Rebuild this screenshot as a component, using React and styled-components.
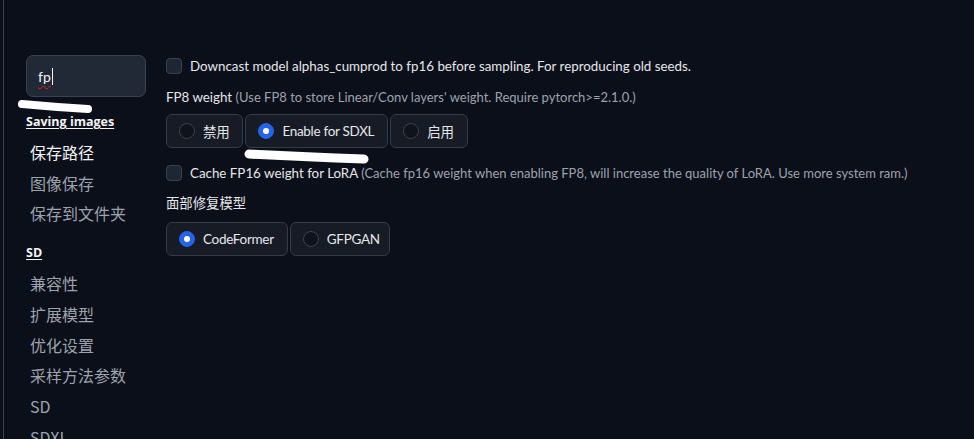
import React from 'react'
import styled, { createGlobalStyle } from 'styled-components'

const GlobalStyle = createGlobalStyle`
    html, body {
        margin: 0;
        padding: 0;
        background: #0b0f19;
        overflow: hidden;
    }
    body {
        font-family: Lato, "Noto Sans", "Noto Sans CJK SC", sans-serif;
        color: #e5e7eb;
    }
`;

const Page = styled.div`
    display: flex;
    height: 439px;
    margin-left: 3px;
    border-left: 1px solid #3b4252;
`;

const Sidebar = styled.nav`
    position: relative;
    width: 140px;
    padding: 55px 0 0 22px;
    display: flex;
    flex-direction: column;
    flex-shrink: 0;

    & > * {
        flex-shrink: 0;
    }
`;

const Search = styled.div`
    box-sizing: border-box;
    width: 120px;
    height: 42px;
    border-radius: 7px;
    background: #212836;
    border: 1px solid #3a4252;
    display: flex;
    align-items: center;
    padding-left: 11px;
    font-size: 14px;
    color: #f3f4f6;
`;

const Typed = styled.span`
    text-decoration: underline wavy #e02424;
    text-decoration-thickness: 1px;
    text-underline-offset: 3px;
`;

const Caret = styled.span`
    display: inline-block;
    width: 1px;
    height: 17px;
    background: #f3f4f6;
    margin-left: 1px;
`;

const GroupTitle = styled.a`
    font-family: "Open Sans", "Noto Sans CJK SC", sans-serif;
    font-size: 12.5px;
    font-weight: 700;
    color: #f3f4f6;
    text-decoration: underline;
    text-underline-offset: 2px;
    line-height: 20px;
    margin-top: ${props => props.first ? '15px' : '14px'};
    margin-bottom: 5px;
`;

const NavItem = styled.div`
    font-family: "Noto Sans CJK SC", "Noto Sans", sans-serif;
    font-size: 16px;
    line-height: 30.7px;
    padding-left: 4px;
    color: ${props => props.active ? '#f3f4f6' : '#9ca3af'};
    white-space: nowrap;
`;

const Content = styled.main`
    position: relative;
    flex: 1;
    padding-top: 58px;
    display: flex;
    flex-direction: column;
    align-items: flex-start;
    font-size: 13.35px;

    & > * {
        flex-shrink: 0;
    }
`;

const CheckRow = styled.label`
    display: flex;
    align-items: center;
    gap: 8px;
    height: 16px;
    white-space: nowrap;
    margin-top: ${props => props.gap || 0}px;
`;

const Box = styled.span`
    box-sizing: border-box;
    width: 16px;
    height: 16px;
    border-radius: 4px;
    background: #1f2633;
    border: 1px solid #3a4252;
`;

const Label = styled.div`
    line-height: 20px;
    white-space: nowrap;
    margin-top: ${props => props.gap}px;
    font-family: Lato, "Noto Sans CJK SC", sans-serif;
`;

const Hint = styled.span`
    color: #9ca3af;
    font-size: 13px;
`;

const RadioGroup = styled.div`
    display: flex;
    gap: 2px;
    margin-top: ${props => props.gap}px;
`;

const Option = styled.label`
    box-sizing: border-box;
    height: 34px;
    display: flex;
    align-items: center;
    gap: 8px;
    padding: 0 ${props => props.pr}px 0 12px;
    border-radius: 6px;
    background: #161b26;
    border: 1px solid #343b49;
    font-size: 13.5px;
    letter-spacing: -0.3px;
    color: #e5e7eb;
    white-space: nowrap;
`;

const Dot = styled.span`
    box-sizing: border-box;
    width: 16px;
    height: 16px;
    border-radius: 50%;
    display: flex;
    align-items: center;
    justify-content: center;
    background: ${props => props.on ? '#2563eb' : '#0f131c'};
    border: 1px solid ${props => props.on ? '#2563eb' : '#3a4252'};

    &::after {
        content: '';
        width: 6px;
        height: 6px;
        border-radius: 50%;
        background: ${props => props.on ? '#ffffff' : 'transparent'};
    }
`;

const Scribble = styled.svg`
    position: absolute;
    left: ${props => props.x}px;
    top: ${props => props.y}px;
    overflow: visible;
    pointer-events: none;
`;

const sections = [
    { title: 'Saving images', items: ['保存路径', '图像保存', '保存到文件夹'] },
    { title: 'SD', items: ['兼容性', '扩展模型', '优化设置', '采样方法参数', 'SD', 'SDXL'] },
];

const Radio = ({ options, value, gap }) => (
    <RadioGroup gap={gap}>
        {options.map(o => (
            <Option key={o} pr={o === 'GFPGAN' ? 9 : 13}>
                <Dot on={o === value} />
                {o}
            </Option>
        ))}
    </RadioGroup>
);

const App = () => {
    return (
        <>
            <GlobalStyle />
            <Page>
                <Sidebar>
                    <Search>
                        <Typed>fp</Typed><Caret />
                    </Search>
                    {sections.map((s, i) => (
                        <React.Fragment key={s.title}>
                            <GroupTitle first={i === 0}>{s.title}</GroupTitle>
                            {s.items.map((item, j) => (
                                <NavItem key={item} active={i === 0 && j === 0}>{item}</NavItem>
                            ))}
                        </React.Fragment>
                    ))}
                    <Scribble x={10} y={100} width="80" height="14">
                        <path d="M8 4 Q40 7 74 9" stroke="#ffffff" strokeWidth="8" strokeLinecap="round" fill="none" />
                    </Scribble>
                </Sidebar>
                <Content>
                    <CheckRow>
                        <Box />
                        Downcast model alphas_cumprod to fp16 before sampling. For reproducing old seeds.
                    </CheckRow>
                    <Label gap={13}>
                        FP8 weight <Hint>(Use FP8 to store Linear/Conv layers' weight. Require pytorch&gt;=2.1.0.)</Hint>
                    </Label>
                    <Radio options={['禁用', 'Enable for SDXL', '启用']} value="Enable for SDXL" gap={7} />
                    <CheckRow gap={17}>
                        <Box />
                        <span>
                            Cache FP16 weight for LoRA <Hint>(Cache fp16 weight when enabling FP8, will increase the quality of LoRA. Use more system ram.)</Hint>
                        </span>
                    </CheckRow>
                    <Label gap={12}>面部修复模型</Label>
                    <Radio options={['CodeFormer', 'GFPGAN']} value="CodeFormer" gap={9} />
                    <Scribble x={78} y={149} width="130" height="16">
                        <path d="M5 5 Q60 8 120 10" stroke="#ffffff" strokeWidth="9" strokeLinecap="round" fill="none" />
                    </Scribble>
                </Content>
            </Page>
        </>
    )
}

export default App;
